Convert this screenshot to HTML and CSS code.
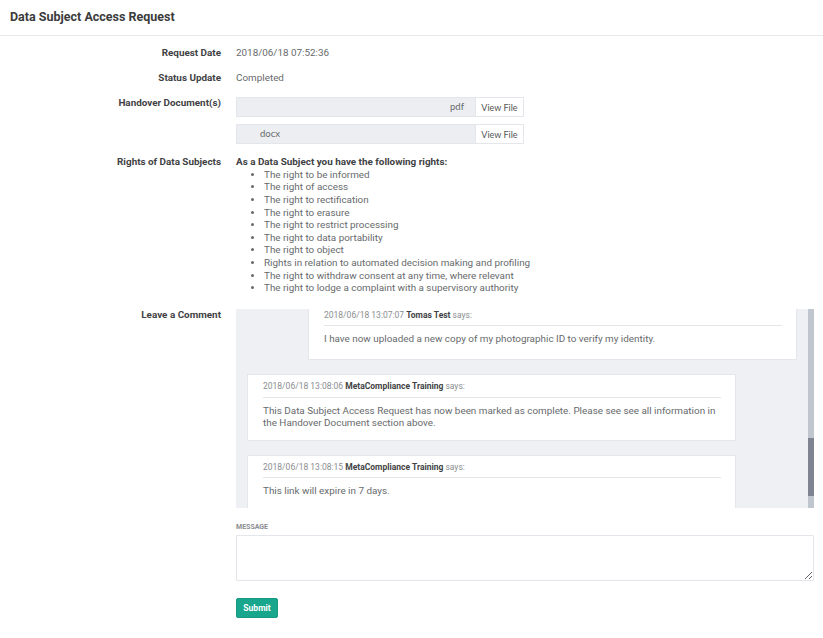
FILE: index.html
```html
<!DOCTYPE html>
<html>
<head>
<meta charset="utf-8">
<link rel="stylesheet" href="styles.css">
</head>
<body>
<div class="page">
  <header class="page-head"><h1>Data Subject Access Request</h1></header>
  <main class="form">
    <div class="row">
      <div class="label">Request Date</div>
      <div class="value">2018/06/18 07:52:36</div>
    </div>
    <div class="row">
      <div class="label">Status Update</div>
      <div class="value">Completed</div>
    </div>
    <div class="row">
      <div class="label label-files">Handover Document(s)</div>
      <div class="value files">
        <div class="file"><div class="file-name right">pdf</div><button class="file-btn">View File</button></div>
        <div class="file"><div class="file-name indent">docx</div><button class="file-btn">View File</button></div>
      </div>
    </div>
    <div class="row">
      <div class="label">Rights of Data Subjects</div>
      <div class="value rights">
        <div class="rights-head">As a Data Subject you have the following rights:</div>
        <ul>
          <li>The right to be informed</li>
          <li>The right of access</li>
          <li>The right to rectification</li>
          <li>The right to erasure</li>
          <li>The right to restrict processing</li>
          <li>The right to data portability</li>
          <li>The right to object</li>
          <li>Rights in relation to automated decision making and profiling</li>
          <li>The right to withdraw consent at any time, where relevant</li>
          <li>The right to lodge a complaint with a supervisory authority</li>
        </ul>
      </div>
    </div>
    <div class="row comment-row">
      <div class="label">Leave a Comment</div>
      <div class="value">
        <div class="chat">
          <div class="chat-list">
            <div class="msg mine">
              <div class="meta">2018/06/18 13:07:07 <b>Tomas Test</b> says:</div>
              <div class="body">I have now uploaded a new copy of my photographic ID to verify my identity.</div>
            </div>
            <div class="msg">
              <div class="meta">2018/06/18 13:08:06 <b>MetaCompliance Training</b> says:</div>
              <div class="body">This Data Subject Access Request has now been marked as complete. Please see see all information in the Handover Document section above.</div>
            </div>
            <div class="msg">
              <div class="meta">2018/06/18 13:08:15 <b>MetaCompliance Training</b> says:</div>
              <div class="body">This link will expire in 7 days.</div>
            </div>
          </div>
          <div class="scroll-track"><div class="scroll-thumb"></div></div>
        </div>
        <label class="msg-label" for="message">MESSAGE</label>
        <textarea id="message" class="msg-input"></textarea>
        <button class="submit">Submit</button>
      </div>
    </div>
  </main>
</div>
</body>
</html>
```

FILE: styles.css
```css
* { box-sizing: border-box; }
html, body { margin: 0; padding: 0; background: #fff; }
body {
  font-family: Roboto, "Liberation Sans", Arial, sans-serif;
  font-size: 9.9px;
  color: #676a6c;
  line-height: 12.6px;
}
.page-head {
  height: 36px;
  border-bottom: 1px solid #e7eaec;
  padding: 10px 10px 0;
}
.page-head h1 {
  margin: 0;
  font-size: 12.5px;
  line-height: 14px;
  font-weight: 700;
  color: #3b3b3b;
}
.form { padding-top: 11px; }
.row {
  display: grid;
  grid-template-columns: 221px 1fr;
  column-gap: 15px;
  margin-bottom: 12px;
}
.label {
  text-align: right;
  font-weight: 700;
  color: #3f4244;
}
.label-files { padding-top: 1px; }
.files { display: flex; flex-direction: column; gap: 7px; padding-top: 1px; }
.file {
  display: flex;
  width: 288px;
  height: 20px;
}
.file-name {
  flex: 1;
  background: #eceef1;
  border: 1px solid #e3e6ea;
  border-right: none;
  line-height: 18px;
  color: #676a6c;
  font-family: Lato, "Liberation Sans", sans-serif;
  font-size: 9.5px;
}
.file-name.right { text-align: right; padding-right: 11px; }
.file-name.indent { padding-left: 23px; }
.file-btn {
  width: 49px;
  background: #fff;
  border: 1px solid #e3e6ea;
  font-family: Lato, "Liberation Sans", sans-serif;
  font-size: 9px;
  color: #555;
  padding: 0;
}
.rights-head { font-weight: 700; color: #3f4244; }
.rights ul { margin: 0; padding-left: 28px; }
.rights li { margin: 0; }
.comment-row { margin-top: 14px; }
.chat {
  display: flex;
  width: 578px;
  height: 199px;
  background: #eef0f4;
  overflow: hidden;
}
.chat-list {
  flex: 1;
  display: flex;
  flex-direction: column;
  gap: 14px;
  padding: 0 11px;
  margin-top: -6px;
}
.msg {
  width: 489px;
  background: #fff;
  border: 1px solid #e3e6ea;
  padding: 5px 14px 10px 15px;
  flex-shrink: 0;
}
.msg.mine { align-self: flex-end; padding-bottom: 13px; }
.meta {
  font-size: 8.5px;
  color: #8a8d8f;
  padding-bottom: 4px;
  border-bottom: 1px solid #e4e6e9;
  margin-bottom: 7px;
}
.meta b { color: #3f4244; font-weight: 700; }
.body { font-size: 9.9px; }
.scroll-track {
  width: 6px;
  flex-shrink: 0;
  background: #c0c6ce;
  padding-top: 129px;
}
.scroll-thumb {
  height: 58px;
  background: #7e8491;
}
.msg-label {
  display: block;
  margin-top: 14px;
  font-size: 7px;
  font-weight: 700;
  color: #8a8d8f;
  line-height: 10px;
}
.msg-input {
  display: block;
  width: 578px;
  height: 46px;
  margin-top: 3px;
  border: 1px solid #e3e6ea;
  border-radius: 1px;
  resize: vertical;
  font-family: inherit;
}
.submit {
  display: block;
  margin-top: 17px;
  width: 42px;
  height: 20px;
  padding: 0;
  background: #18a68c;
  border: 1px solid #169a82;
  border-radius: 2px;
  color: #fff;
  font-family: Roboto, "Liberation Sans", sans-serif;
  font-size: 8.5px;
  font-weight: 700;
}
```
